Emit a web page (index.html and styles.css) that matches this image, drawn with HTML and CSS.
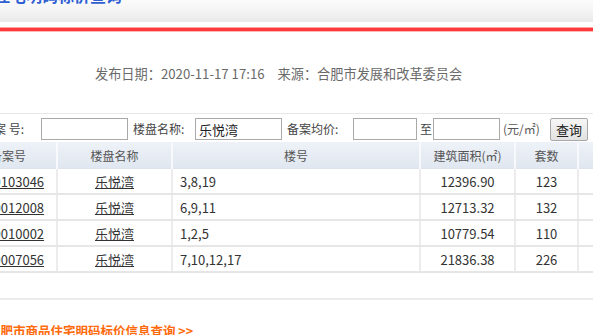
FILE: index.html
```html
<!DOCTYPE html>
<html lang="zh-CN">
<head>
<meta charset="utf-8">
<title>合肥市商品住宅明码标价查询</title>
<link rel="stylesheet" href="styles.css">
</head>
<body>
<div class="page">
  <div class="topbar"><h1 class="title">合肥市商品住宅明码标价查询</h1></div>
  <div class="redline"></div>
  <div class="meta-wrap">
    <p class="meta"><span>发布日期：2020-11-17 17:16</span><span class="src">来源：合肥市发展和改革委员会</span></p>
  </div>
  <form class="search">
    <label class="lbl lbl-1">备案 号:</label>
    <input class="field field-wide" type="text" value="">
    <label class="lbl lbl-2">楼盘名称:</label>
    <input class="field field-wide" type="text" value="乐悦湾">
    <label class="lbl lbl-3">备案均价:</label>
    <input class="field field-p1" type="text" value="">
    <span class="lbl lbl-to">至</span>
    <input class="field field-p2" type="text" value="">
    <span class="lbl lbl-unit">(元/㎡)</span>
    <button class="btn" type="button">查询</button>
  </form>
  <table class="grid">
    <colgroup>
      <col class="c1"><col class="c2"><col class="c3"><col class="c4"><col class="c5"><col class="c6">
    </colgroup>
    <thead>
      <tr><th>备案号</th><th>楼盘名称</th><th>楼号</th><th>建筑面积(㎡)</th><th>套数</th><th></th></tr>
    </thead>
    <tbody>
      <tr><td class="ctr"><a href="#">2020103046</a></td><td class="ctr"><a href="#">乐悦湾</a></td><td class="lft">3,8,19</td><td class="ctr">12396.90</td><td class="ctr">123</td><td></td></tr>
      <tr><td class="ctr"><a href="#">2020012008</a></td><td class="ctr"><a href="#">乐悦湾</a></td><td class="lft">6,9,11</td><td class="ctr">12713.32</td><td class="ctr">132</td><td></td></tr>
      <tr><td class="ctr"><a href="#">2020010002</a></td><td class="ctr"><a href="#">乐悦湾</a></td><td class="lft">1,2,5</td><td class="ctr">10779.54</td><td class="ctr">110</td><td></td></tr>
      <tr><td class="ctr"><a href="#">2019007056</a></td><td class="ctr"><a href="#">乐悦湾</a></td><td class="lft">7,10,12,17</td><td class="ctr">21836.38</td><td class="ctr">226</td><td></td></tr>
    </tbody>
  </table>
  <div class="more"><a href="#">合肥市商品住宅明码标价信息查询 &gt;&gt;</a></div>
</div>
</body>
</html>
```
FILE: styles.css
```css
html, body {
  margin: 0;
  padding: 0;
  background: #fff;
}
body {
  width: 593px;
  height: 335px;
  overflow: hidden;
  font-family: "Noto Sans CJK SC", "Noto Sans", sans-serif;
  color: #333;
}
.page {
  width: 680px;
  margin-left: -40px;
}
.topbar {
  display: flow-root;
  height: 22px;
  background: linear-gradient(#fbfbfb, #f3f3f3 55%, #e9e9e9);
}
.title {
  margin: -15px 0 0 -46px;
  font-size: 16px;
  line-height: 20px;
  font-weight: bold;
  color: #2f5fd3;
  white-space: nowrap;
}
.redline {
  margin-top: 5px;
  height: 3px;
  background: #ff3a3a;
  border-top: 1px solid #ffa3a3;
  border-bottom: 1px solid #ffb8b8;
}
.meta-wrap {
  display: flow-root;
  border-bottom: 1px solid #e8e8e8;
}
.meta {
  display: flex;
  gap: 13px;
  margin: 32px 0 29px;
  padding-left: 135px;
  font-size: 13.2px;
  line-height: 20px;
  color: #6a6a6a;
  white-space: nowrap;
}
.search {
  display: flex;
  align-items: center;
  height: 22px;
  padding: 4px 0 2px 22px;
  margin: 0;
}
.lbl {
  font-size: 12px;
  line-height: 22px;
  color: #444;
  white-space: nowrap;
  flex: none;
}
.lbl-1 { width: 59px; }
.lbl-2 { width: 62px; margin-left: 5px; }
.lbl-3 { width: 66px; margin-left: 5px; }
.lbl-to { width: 13px; margin-left: 3px; }
.lbl-unit { width: 47px; margin-left: 3px; color: #555; }
.field {
  box-sizing: border-box;
  height: 22px;
  margin: 0;
  padding: 0 3px;
  border: 1px solid #a9a9a9;
  font-family: "Noto Sans CJK SC", sans-serif;
  font-size: 13px;
  color: #222;
  background: #fff;
  flex: none;
}
.field-wide { width: 87px; }
.field-p1 { width: 64px; }
.field-p2 { width: 67px; }
.btn {
  box-sizing: border-box;
  width: 38px;
  height: 23px;
  padding: 0;
  border: 1px solid #a8a8a8;
  border-radius: 2px;
  background: linear-gradient(#f6f6f6, #e2e2e2);
  font-family: "Noto Sans CJK SC", sans-serif;
  font-size: 13px;
  color: #222;
  flex: none;
}
.grid {
  width: 678px;
  border-collapse: collapse;
  table-layout: fixed;
}
.c1 { width: 97px; }
.c2 { width: 115px; }
.c3 { width: 248px; }
.c4 { width: 95px; }
.c5 { width: 63px; }
.c6 { width: 60px; }
.grid th {
  height: 26px;
  padding: 0;
  font-size: 12px;
  font-weight: normal;
  color: #555;
  background: linear-gradient(#eef2f8, #e1e7f0);
  border-right: 2px solid #f7f9fc;
  border-bottom: 1px solid #dfe3ea;
}
.grid td {
  height: 24px;
  padding: 0;
  font-size: 13px;
  color: #333;
  border-right: 2px solid #ececec;
  border-bottom: 2px solid #e6e6e6;
  white-space: nowrap;
  overflow: hidden;
}
.grid .ctr { text-align: center; }
.grid .lft { text-align: left; padding-left: 7px; }
.grid a {
  color: #333;
  text-decoration: underline;
}
.more {
  margin-top: 25px;
  border-top: 2px solid #ebebeb;
  padding: 19px 0 0 28px;
  line-height: 20px;
}
.more a {
  font-size: 12.5px;
  font-weight: bold;
  color: #ff6a0c;
  text-decoration: none;
  white-space: nowrap;
}
```
